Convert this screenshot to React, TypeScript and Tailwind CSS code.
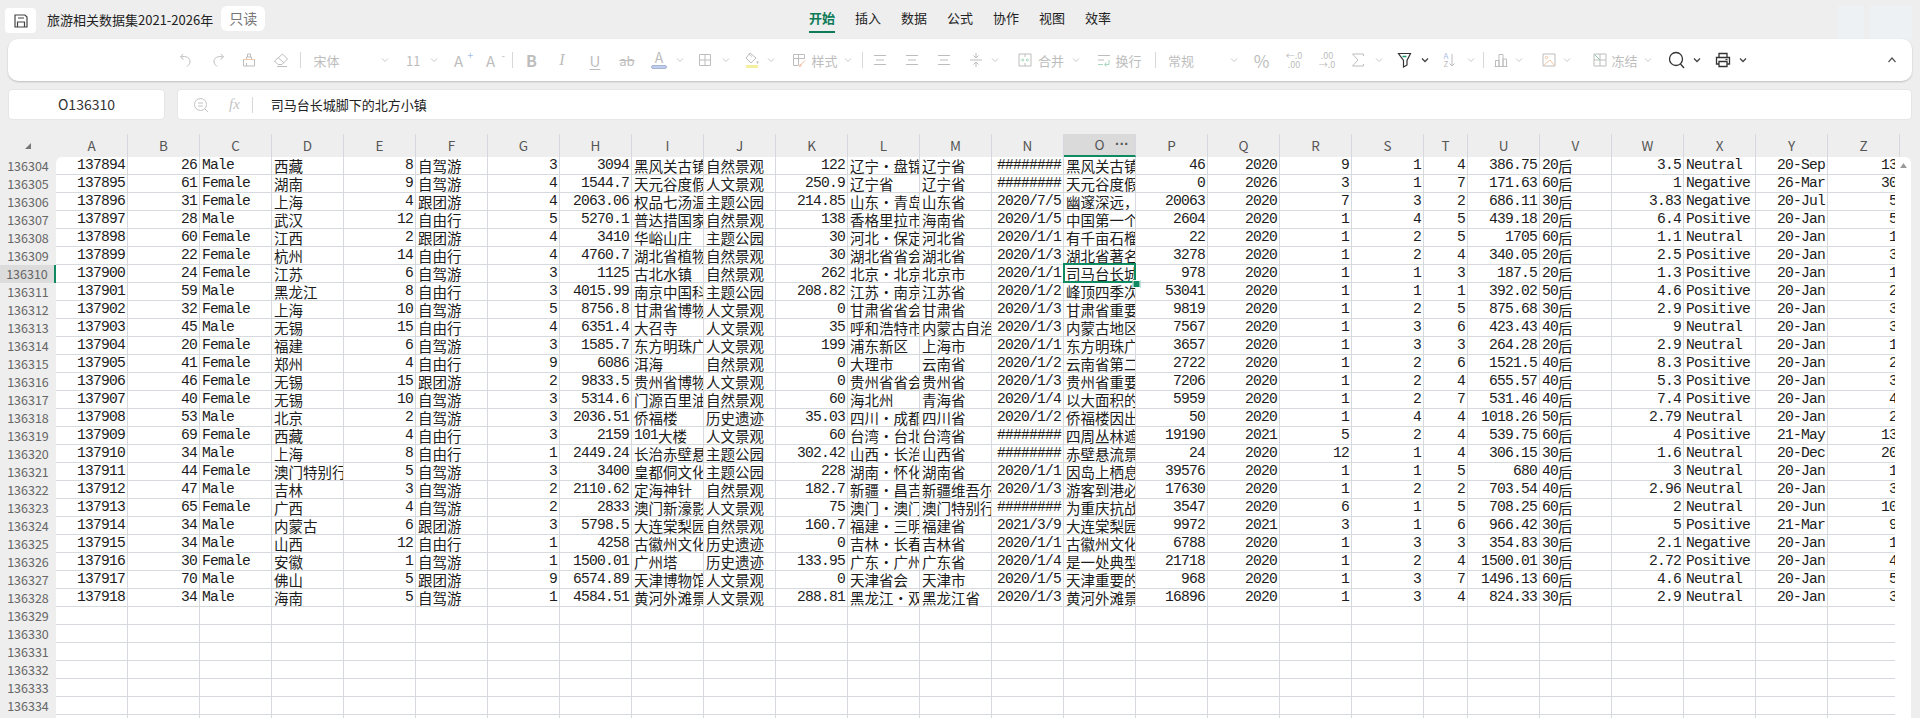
import React from 'react';

const rows = [
  '137894|26|Male|西藏|8|自驾游|3|3094|黑风关古镇|自然景观|122|辽宁·盘锦|辽宁省|########|黑风关古镇|46|2020|9|1|4|386.75|20后|3.5|Neutral|20-Sep|13',
  '137895|61|Female|湖南|9|自驾游|4|1544.7|天元谷度假|人文景观|250.9|辽宁省|辽宁省|########|天元谷度假|0|2026|3|1|7|171.63|60后|1|Negative|26-Mar|30',
  '137896|31|Female|上海|4|跟团游|4|2063.06|权品七汤温泉|主题公园|214.85|山东·青岛|山东省|2020/7/5|幽邃深远，|20063|2020|7|3|2|686.11|30后|3.83|Negative|20-Jul|5',
  '137897|28|Male|武汉|12|自由行|5|5270.1|普达措国家|自然景观|138|香格里拉市|海南省|2020/1/5|中国第一个|2604|2020|1|4|5|439.18|20后|6.4|Positive|20-Jan|5',
  '137898|60|Female|江西|2|跟团游|4|3410|华峪山庄|主题公园|30|河北·保定|河北省|2020/1/1|有千亩石榴|22|2020|1|2|5|1705|60后|1.1|Neutral|20-Jan|1',
  '137899|22|Female|杭州|14|自由行|4|4760.7|湖北省植物|自然景观|30|湖北省省会|湖北省|2020/1/3|湖北省著名|3278|2020|1|2|4|340.05|20后|2.5|Positive|20-Jan|3',
  '137900|24|Female|江苏|6|自驾游|3|1125|古北水镇|自然景观|262|北京·北京|北京市|2020/1/1|司马台长城脚下的北方小镇|978|2020|1|1|3|187.5|20后|1.3|Positive|20-Jan|1',
  '137901|59|Male|黑龙江|8|自由行|3|4015.99|南京中国科|主题公园|208.82|江苏·南京|江苏省|2020/1/2|峰顶四季次|53041|2020|1|1|1|392.02|50后|4.6|Positive|20-Jan|2',
  '137902|32|Female|上海|10|自驾游|5|8756.8|甘肃省博物|人文景观|0|甘肃省省会|甘肃省|2020/1/3|甘肃省重要|9819|2020|1|2|5|875.68|30后|2.9|Positive|20-Jan|3',
  '137903|45|Male|无锡|15|自由行|4|6351.4|大召寺|人文景观|35|呼和浩特市|内蒙古自治区|2020/1/3|内蒙古地区|7567|2020|1|3|6|423.43|40后|9|Neutral|20-Jan|3',
  '137904|20|Female|福建|6|自驾游|3|1585.7|东方明珠广|人文景观|199|浦东新区|上海市|2020/1/1|东方明珠广|3657|2020|1|3|3|264.28|20后|2.9|Neutral|20-Jan|1',
  '137905|41|Female|郑州|4|自由行|9|6086|洱海|自然景观|0|大理市|云南省|2020/1/2|云南省第二|2722|2020|1|2|6|1521.5|40后|8.3|Positive|20-Jan|2',
  '137906|46|Female|无锡|15|跟团游|2|9833.5|贵州省博物|人文景观|0|贵州省省会|贵州省|2020/1/3|贵州省重要|7206|2020|1|2|4|655.57|40后|5.3|Positive|20-Jan|3',
  '137907|40|Female|无锡|10|自驾游|3|5314.6|门源百里油|自然景观|60|海北州|青海省|2020/1/4|以大面积的|5959|2020|1|2|7|531.46|40后|7.4|Positive|20-Jan|4',
  '137908|53|Male|北京|2|自驾游|3|2036.51|侨福楼|历史遗迹|35.03|四川·成都|四川省|2020/1/2|侨福楼因出|50|2020|1|4|4|1018.26|50后|2.79|Neutral|20-Jan|2',
  '137909|69|Female|西藏|4|自由行|3|2159|101大楼|人文景观|60|台湾·台北|台湾省|########|四周丛林遮|19190|2021|5|2|4|539.75|60后|4|Positive|21-May|13',
  '137910|34|Male|上海|8|自由行|1|2449.24|长治赤壁悬|主题公园|302.42|山西·长治|山西省|########|赤壁悬流景|24|2020|12|1|4|306.15|30后|1.6|Neutral|20-Dec|20',
  '137911|44|Female|澳门特别行政区|5|自驾游|3|3400|皇都侗文化|主题公园|228|湖南·怀化|湖南省|2020/1/1|因岛上栖息|39576|2020|1|1|5|680|40后|3|Neutral|20-Jan|1',
  '137912|47|Male|吉林|3|自驾游|2|2110.62|定海神针|自然景观|182.7|新疆·昌吉|新疆维吾尔|2020/1/3|游客到港必|17630|2020|1|2|2|703.54|40后|2.96|Neutral|20-Jan|3',
  '137913|65|Female|广西|4|自驾游|2|2833|澳门新濠影|人文景观|75|澳门·澳门|澳门特别行|########|为重庆抗战|3547|2020|6|1|5|708.25|60后|2|Neutral|20-Jun|10',
  '137914|34|Male|内蒙古|6|跟团游|3|5798.5|大连棠梨园|自然景观|160.7|福建·三明|福建省|2021/3/9|大连棠梨园|9972|2021|3|1|6|966.42|30后|5|Positive|21-Mar|9',
  '137915|34|Male|山西|12|自由行|1|4258|古徽州文化|历史遗迹|0|吉林·长春|吉林省|2020/1/1|古徽州文化|6788|2020|1|3|3|354.83|30后|2.1|Negative|20-Jan|1',
  '137916|30|Female|安徽|1|自驾游|1|1500.01|广州塔|历史遗迹|133.95|广东·广州|广东省|2020/1/4|是一处典型|21718|2020|1|2|4|1500.01|30后|2.72|Positive|20-Jan|4',
  '137917|70|Male|佛山|5|跟团游|9|6574.89|天津博物馆|人文景观|0|天津省会|天津市|2020/1/5|天津重要的|968|2020|1|3|7|1496.13|60后|4.6|Neutral|20-Jan|5',
  '137918|34|Male|海南|5|自驾游|1|4584.51|黄河外滩景|人文景观|288.81|黑龙江·双鸭|黑龙江省|2020/1/3|黄河外滩景|16896|2020|1|3|4|824.33|30后|2.9|Neutral|20-Jan|3',
].map(r => r.split('|'));

const columns = 'ABCDEFGHIJKLMNOPQRSTUVWXYZ'.split('');
const leftCols = 'CDFIJLMOVX';
const FIRST_ROW = 136304;
const ROW_COUNT = 32;
const SELECTED_ROW = 136310;

const cn = (...classes: any[]) => classes.filter(Boolean).join(' ');

// latin runs go in a mono face, cjk in the sans stack, the middle dot takes a full cell
const CellText = ({ text }: { text: string }) => {
  const parts = text.split(/([\x00-\x7f]+|·)/).filter(Boolean);
  return (
    <>
      {parts.map((p, i) =>
        p === '·' ? (
          <span key={i} className="inline-block w-[14.5px] text-center">·</span>
        ) : /^[\x00-\x7f]+$/.test(p) ? (
          <span key={i} className="font-['Liberation_Mono',monospace] text-[14.67px] tracking-[-0.8px]">{p}</span>
        ) : (
          <span key={i}>{p}</span>
        )
      )}
    </>
  );
};

const Svg = ({ children, className }: any) => (
  <svg viewBox="0 0 16 16" fill="none" stroke="currentColor" strokeWidth="1" className={cn('w-4 h-4 shrink-0', className)}>
    {children}
  </svg>
);

const Chev = ({ className, dark }: any) => (
  <svg viewBox="0 0 10 10" fill="none" stroke="currentColor" strokeWidth={dark ? 1.3 : 1} className={cn('w-[10px] h-[10px] shrink-0', dark ? 'text-[#444]' : 'text-[#c8c8c8]', className)}>
    <path d="M2 3.5 5 6.5 8 3.5" />
  </svg>
);

const Sep = ({ className }: any) => <div className={cn('w-px h-4 bg-[#d8d8d8] shrink-0', className)} />;

const Label = ({ children, className }: any) => <span className={cn('text-[13px] text-[#bdbdbd] shrink-0 leading-none', className)}>{children}</span>;

const Toolbar = () => (
  <div className="mx-2 h-[42px] bg-white rounded-[10px] shadow-[0_1px_2px_rgba(0,0,0,0.2)] flex items-center text-[#bdbdbd]">
    <Svg className="ml-[170px]"><path d="M5 2 2.500 5 5.500 7.500M3 5c5-1.500 9.500 1 9 5-.3 2-1.500 3-3 4.500" /></Svg>
    <Svg className="ml-[15.5px]"><path d="M11 2 13.500 5 10.500 7.500M13 5C8 3.500 3.500 6 4 10c.3 2 1.500 3 3 4.500" /></Svg>
    <Svg className="ml-[15.5px]">
      <path d="M2.500 7.500V14h11V7.500M5.500 14v-3M5.500 7.500V5h5v2.500M6.500 5V2h3v3" />
      <path d="M2 7.500h12" className="text-[#f0c8a8]" />
    </Svg>
    <Svg className="ml-4"><path d="M9.500 2 14.500 7 9 12.500H5L1.500 9zM5 5.500 11 11M4 14.500h10" /></Svg>
    <Sep className="ml-[11px]" />
    <Label className="ml-[12.5px]">宋体</Label>
    <Chev className="ml-[40.5px]" />
    <Label className="ml-[16px]">11</Label>
    <Chev className="ml-[9px]" />
    <span className="relative ml-[14.5px] w-4 text-[15px] leading-none">A<span className="absolute -right-[3px] -top-[3px] text-[10px] leading-none text-[#a8bce8]">+</span></span>
    <span className="relative ml-4 w-4 text-[15px] leading-none">A<span className="absolute -right-[3px] -top-[3px] text-[10px] leading-none">-</span></span>
    <Sep className="ml-[10px]" />
    <span className="ml-[10.5px] w-4 text-center text-[16px] font-bold leading-none">B</span>
    <span className="ml-[14.5px] w-4 text-center text-[16px] italic leading-none font-['Liberation_Serif',serif]">I</span>
    <span className="ml-[17px] w-4 text-center text-[15px] underline underline-offset-2 leading-none">U</span>
    <span className="ml-4 w-4 text-center text-[13px] line-through leading-none">ab</span>
    <div className="ml-4 w-4 flex flex-col items-center shrink-0">
      <span className="text-[14px] leading-[13px]">A</span>
      <div className="w-4 h-1 mt-px rounded-sm bg-[#bccdf0] border border-[#a8b4d0]" />
    </div>
    <Chev className="ml-2" />
    <Svg className="ml-[12.5px]"><path d="M2.500 2.500h11v11h-11zM8 2.500v11M2.500 8h11" /></Svg>
    <Chev className="ml-[7.5px]" />
    <div className="ml-[13px] w-4 flex flex-col items-center shrink-0">
      <svg viewBox="0 0 16 13" fill="none" stroke="currentColor" className="w-4 h-[13px]"><path d="M6 1 2 6l5 5 5-5zM5 1.500c1 2 2 2.500 3 3M13.500 9c-.8 1-.8 2 0 2.500.8-.5.8-1.500 0-2.500z" /></svg>
      <div className="w-3 h-[3px] bg-[#f5f0a0]" />
    </div>
    <Chev className="ml-[6.5px]" />
    <Svg className="ml-[14.5px]">
      <path d="M13.500 7V2.500h-11v11H7M2.500 6.500h11M7.500 2.500v11" />
      <path d="M14 8.500 9.500 13M9 12.500c-.5.500-1 1-.5 2 1 0 1.500-.5 2-1z" className="text-[#f0b898]" />
    </Svg>
    <Label className="ml-[4.5px]">样式</Label>
    <Chev className="ml-[5.5px]" />
    <Sep className="ml-[9.5px]" />
    <Svg className="ml-[9px]"><path d="M2 3.500h12M4 8h8M2 12.500h12" /></Svg>
    <Svg className="ml-[15.5px]"><path d="M2 3.500h12M4 8h8M2 12.500h12" /></Svg>
    <Svg className="ml-4"><path d="M2 3.500h12M4 8h8M2 12.500h12" /></Svg>
    <Svg className="ml-[16.5px]"><path d="M2 8h12M8 1v5M8 10v5M5.500 3.500 8 6l2.500-2.500M5.500 12.500 8 10l2.500 2.500" /></Svg>
    <Chev className="ml-[5.5px]" />
    <Svg className="ml-[17.5px]">
      <path d="M2 2h12v12H2zM8 2v3M8 11v3" />
      <path d="M3.500 8h3M5.500 6.500 7 8l-1.500 1.500M12.500 8h-3M10.500 6.500 9 8l1.500 1.500" className="text-[#a8d8c0]" />
    </Svg>
    <Label className="ml-[4.5px]">合并</Label>
    <Chev className="ml-[7px]" />
    <Svg className="ml-[15px]">
      <path d="M2 3.500h12M2 8h6" />
      <path d="M2 12.500h5M13 8v4.500H9M10.500 10.500 8.500 12.500l2 2" className="text-[#a8d8c0]" />
    </Svg>
    <Label className="ml-[3.5px]">换行</Label>
    <Sep className="ml-[13px]" />
    <Label className="ml-[12.5px]">常规</Label>
    <Chev className="ml-[35px]" />
    <span className="ml-[14.5px] w-4 text-center text-[17px] leading-none">%</span>
    <span className="ml-[16.5px] w-4 flex flex-col items-center whitespace-nowrap text-[9px] leading-[9px]"><span>←.0</span><span>.00</span></span>
    <span className="ml-[17px] w-4 flex flex-col items-center whitespace-nowrap text-[9px] leading-[9px]"><span>.00</span><span>→.0</span></span>
    <Svg className="ml-[15px]"><path d="M13.500 4V2h-11L8 8l-5.500 6h11v-2" /></Svg>
    <Chev className="ml-2" />
    <Svg className="ml-[12.5px] text-[#333]">
      <path d="M1.500 1.500h12L10 8.500V13l-3.500 2V8.500z" strokeWidth="1.200" />
      <path d="M5.500 4.500h4" stroke="#1a9a6c" strokeWidth="1.500" />
    </Svg>
    <Chev dark className="ml-[7.5px]" />
    <div className="ml-[13.5px] w-4 shrink-0 flex items-end">
      <span className="flex flex-col text-[8px] leading-[8px] text-[#a8bce8]"><span>A</span><span className="text-[#bdbdbd]">Z</span></span>
      <svg viewBox="0 0 8 16" fill="none" stroke="currentColor" className="w-2 h-4"><path d="M4 2v12M1.500 11.500 4 14l2.500-2.500" /></svg>
    </div>
    <Chev className="ml-[6.5px]" />
    <Sep className="ml-[6.5px]" />
    <Svg className="ml-[9.5px]"><path d="M1.500 14.500h13M2.500 14.500V8.500h3.500v6M6 14.500V2.500h4v12M10 14.500V7h3.500v7.500" /></Svg>
    <Chev className="ml-[5px]" />
    <Svg className="ml-[17px] text-[#f0c8a8]">
      <path d="M2 2h12v12H2z" className="text-[#bdbdbd]" />
      <circle cx="5.500" cy="5.500" r="1.200" />
      <path d="M2.500 13.500 9 8l4.500 5.500" />
    </Svg>
    <Chev className="ml-[5px]" />
    <Svg className="ml-[19.5px]">
      <path d="M2 2h12v12H2zM8 2v12M2 8h12" />
      <path d="M2.500 2.500 8 8" className="text-[#8cc8a8]" />
    </Svg>
    <Label className="ml-[4px]">冻结</Label>
    <Chev className="ml-[5.5px]" />
    <svg viewBox="0 0 18 18" fill="none" stroke="currentColor" strokeWidth="1.300" className="ml-[15px] w-[18px] h-[18px] shrink-0 text-[#333]"><circle cx="8" cy="8" r="6.500" /><path d="M12.500 13 16 17" /></svg>
    <Chev dark className="ml-[6px]" />
    <Svg className="ml-[13px] text-[#333]">
      <path d="M4 5V1.500h8V5M4 12H1.500V5.500h13V12H12M4 9.500h8v5H4z" strokeWidth="1.300" />
      <path d="M10.500 7.500h2" strokeWidth="1.200" />
    </Svg>
    <Chev dark className="ml-[7px]" />
    <svg viewBox="0 0 10 10" fill="none" stroke="currentColor" strokeWidth="1.200" className="ml-auto mr-[15px] w-[10px] h-[10px] text-[#555]"><path d="M1.500 7 5 3l3.500 4" /></svg>
  </div>
);

const RowHeader = () => {
  const items = Array.from({ length: ROW_COUNT }, (_, i) => FIRST_ROW + i);
  return (
    <div className="w-14 shrink-0 flex flex-col">
      {items.map((n, i) => (
        <div
          key={n}
          className={cn(
            'h-[18px] shrink-0 flex items-center justify-center text-[12.5px] text-[#666]',
            n === SELECTED_ROW && 'bg-[#dcdcdc] border-r-2 border-[#0f8a62]'
          )}
        >
          {i < ROW_COUNT - 1 ? n : ''}
        </div>
      ))}
    </div>
  );
};

const Cell = ({ text, col, row }: any) => {
  const selected = col === 'O' && row === SELECTED_ROW;
  return (
    <div
      className={cn(
        'relative h-[18px] shrink-0 border-r border-b border-[#d6d9de] flex items-end overflow-hidden whitespace-nowrap leading-[17px] text-[14.5px] text-[#1c1c1c]',
        col === 'T' ? 'w-[44px]' : 'w-[72px]',
        leftCols.includes(col) ? 'justify-start pl-[2px]' : 'justify-end pr-[2px]'
      )}
    >
      {text && <CellText text={selected ? text.slice(0, 5) : text} />}
    </div>
  );
};

export default function App() {
  const blanks = Array.from({ length: ROW_COUNT - rows.length }, () => columns.map(() => ''));
  const allRows = [...rows, ...blanks];

  return (
    <div className="w-[1920px] h-[718px] overflow-hidden bg-[#eeeeee] flex flex-col font-['Noto_Sans_CJK_SC',sans-serif]">
      <div className="h-[39px] shrink-0 flex items-start">
        <div className="w-[809px] shrink-0 flex items-start">
          <div className="ml-[5px] mt-2 w-[31px] h-[25px] bg-white rounded-sm flex items-center justify-center text-[#444]">
            <svg viewBox="0 0 16 16" fill="none" stroke="currentColor" strokeWidth="1.200" className="w-4 h-4">
              <path d="M2 2h10l2 2v10H2zM4.500 14V9h7v5M5 5h6" />
            </svg>
          </div>
          <div className="ml-[11px] mt-[11px] text-[13px] leading-[18px] text-[#222] whitespace-nowrap">旅游相关数据集2021-2026年</div>
          <div className="ml-2 mt-[6px] w-[44px] h-[25px] bg-white rounded-md flex items-center justify-center text-[14px] text-[#777]">只读</div>
        </div>
        <div className="flex gap-5">
          {['开始', '插入', '数据', '公式', '协作', '视图', '效率'].map((t, i) => (
            <div
              key={t}
              className={cn(
                'h-[33px] pt-[9px] text-[13px] leading-[18px] whitespace-nowrap',
                i === 0 ? 'text-[#0f7a58] font-bold border-b-2 border-[#0f7a58]' : 'text-[#222]'
              )}
            >
              {t}
            </div>
          ))}
        </div>
        <div className="ml-auto mr-2 mt-[5px] flex gap-[6px]">
          <div className="w-[26px] h-[34px] bg-[#eef1f4]" />
          <div className="w-[42px] h-[34px] bg-[#eef1f4]" />
        </div>
      </div>

      <Toolbar />

      <div className="mx-2 mt-2 h-[31px] shrink-0 flex gap-3">
        <div className="w-[157px] bg-white rounded border border-[#e6e6e6] flex items-center justify-center text-[14px] text-[#333]">O136310</div>
        <div className="flex-1 bg-white rounded border border-[#e6e6e6] flex items-center text-[#c4c4c4]">
          <svg viewBox="0 0 16 16" fill="none" stroke="currentColor" className="ml-[15px] w-4 h-4 shrink-0">
            <circle cx="7.500" cy="7.500" r="6" />
            <path d="M12 12l3 3M5 6h5M5 9h5" />
          </svg>
          <span className="ml-5 text-[15px] italic font-['Liberation_Serif',serif] leading-none">fx</span>
          <Sep className="ml-[12px]" />
          <span className="ml-[18px] text-[13px] text-[#222] whitespace-nowrap">司马台长城脚下的北方小镇</span>
        </div>
      </div>

      <div className="mt-[14px] h-[23px] shrink-0 flex">
        <div className="w-14 shrink-0 flex items-center justify-center">
          <svg viewBox="0 0 8 8" className="w-2 h-2 text-[#777] -ml-[1px]" fill="currentColor"><path d="M7 1v6H1z" /></svg>
        </div>
        {columns.map(c => (
          <div
            key={c}
            className={cn(
              'relative shrink-0 border-r border-[#d5d8dd] flex items-center justify-center text-[13.5px] text-[#555]',
              c === 'T' ? 'w-[44px]' : 'w-[72px]',
              c === 'O' && 'bg-[#dadada] border-b-2 border-b-[#0f8a62]'
            )}
          >
            {c}
            {c === 'O' && <span className="absolute right-[6px] top-[2px] font-['Liberation_Sans',sans-serif] font-bold text-[14px] leading-[16px] text-[#555]">···</span>}
          </div>
        ))}
      </div>

      <div className="flex-1 min-h-0 flex overflow-hidden">
        <RowHeader />
        <div className="relative w-[1839px] shrink-0 bg-white rounded-tl-[6px] overflow-hidden flex flex-col">
          {allRows.map((r, i) => (
            <div key={i} className="flex shrink-0">
              {r.map((text, j) => (
                <Cell key={j} text={text} col={columns[j]} row={FIRST_ROW + i} />
              ))}
            </div>
          ))}
          {/* active cell frame */}
          <div className="absolute left-[1007px] top-[106px] w-[73px] h-[20px] border-2 border-[#0f8a62] pointer-events-none" />
          <div className="absolute left-[1077px] top-[123px] w-[6px] h-[6px] bg-[#0f8a62] border border-white box-content -translate-x-[0.5px] pointer-events-none" />
        </div>
        <div className="w-4 shrink-0 bg-white rounded-tr-[6px] flex justify-center pt-[6px]">
          <svg viewBox="0 0 8 6" className="w-[7px] h-[5px] text-[#999]" fill="currentColor"><path d="M4 0l4 6H0z" /></svg>
        </div>
      </div>
    </div>
  );
}
